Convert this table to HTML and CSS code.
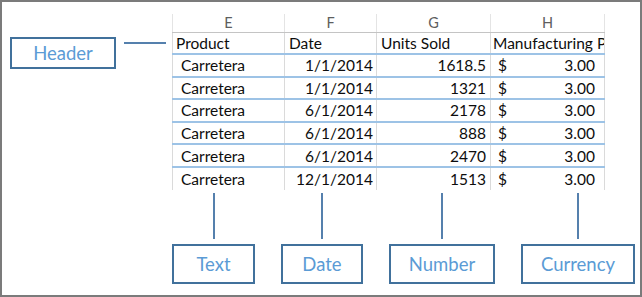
FILE: index.html
```html
<!DOCTYPE html>
<html>
<head>
<meta charset="utf-8">
<link rel="stylesheet" href="styles.css">
</head>
<body>
<div class="frame">
  <div class="top">
    <div class="label-box header-box">Header</div>
    <div class="h-connector"></div>
    <div class="sheet">
      <div class="row letters">
        <div class="cell c">E</div>
        <div class="cell c">F</div>
        <div class="cell c">G</div>
        <div class="cell c">H</div>
      </div>
      <div class="row head">
        <div class="cell h-e">Product</div>
        <div class="cell h-f">Date</div>
        <div class="cell h-g">Units Sold</div>
        <div class="cell h-h">Manufacturing Price</div>
      </div>
      <div class="row data">
        <div class="cell t">Carretera</div>
        <div class="cell d">1/1/2014</div>
        <div class="cell n">1618.5</div>
        <div class="cell cur"><span>$</span><span>3.00</span></div>
      </div>
      <div class="row data">
        <div class="cell t">Carretera</div>
        <div class="cell d">1/1/2014</div>
        <div class="cell n">1321</div>
        <div class="cell cur"><span>$</span><span>3.00</span></div>
      </div>
      <div class="row data">
        <div class="cell t">Carretera</div>
        <div class="cell d">6/1/2014</div>
        <div class="cell n">2178</div>
        <div class="cell cur"><span>$</span><span>3.00</span></div>
      </div>
      <div class="row data">
        <div class="cell t">Carretera</div>
        <div class="cell d">6/1/2014</div>
        <div class="cell n">888</div>
        <div class="cell cur"><span>$</span><span>3.00</span></div>
      </div>
      <div class="row data">
        <div class="cell t">Carretera</div>
        <div class="cell d">6/1/2014</div>
        <div class="cell n">2470</div>
        <div class="cell cur"><span>$</span><span>3.00</span></div>
      </div>
      <div class="row data last">
        <div class="cell t">Carretera</div>
        <div class="cell d">12/1/2014</div>
        <div class="cell n">1513</div>
        <div class="cell cur"><span>$</span><span>3.00</span></div>
      </div>
    </div>
  </div>
  <div class="bottom">
    <div class="callout w-text">
      <div class="v-connector"></div>
      <div class="label-box">Text</div>
    </div>
    <div class="callout w-date">
      <div class="v-connector"></div>
      <div class="label-box">Date</div>
    </div>
    <div class="callout w-number">
      <div class="v-connector"></div>
      <div class="label-box">Number</div>
    </div>
    <div class="callout w-currency">
      <div class="v-connector"></div>
      <div class="label-box">Currency</div>
    </div>
  </div>
</div>
</body>
</html>
```

FILE: styles.css
```css
* { box-sizing: border-box; }
html, body { margin: 0; padding: 0; background: #fff; }
body { font-family: Lato, "Liberation Sans", sans-serif; }

.frame {
  width: 642px;
  height: 297px;
  border: 2px solid #7b7b7b;
  border-right-width: 1px;
  border-bottom-width: 1px;
  background: #fff;
  overflow: hidden;
  box-shadow: inset -1px -1px 0 #7b7b7b;
}

.top {
  display: flex;
  align-items: flex-start;
  padding-top: 12px;
  padding-left: 8px;
}

.label-box {
  border: 2px solid #41719c;
  color: #5b9bd5;
  font-size: 18.5px;
  display: flex;
  align-items: center;
  justify-content: center;
  background: #fff;
}
.header-box {
  width: 106px;
  height: 32px;
  margin-top: 23px;
}
.h-connector {
  width: 42px;
  height: 2px;
  background: #5580ad;
  margin-left: 8px;
  margin-top: 28px;
  margin-right: 6px;
}

.sheet {
  width: 433px;
  font-size: 15.5px;
  color: #0d0d0d;
}
.row {
  display: grid;
  grid-template-columns: 112px 92px 114px 115px;
}
.cell {
  border-left: 1px solid #dadada;
  white-space: nowrap;
  overflow: hidden;
  display: flex;
  align-items: center;
}
.cell:last-child { border-right: 1px solid #dadada; }

.letters { height: 19px; border-bottom: 1px solid #c4c4c4; color: #5e5e5e; font-size: 14.5px; }
.letters .cell { border-left-color: #e4e4e4; }
.letters .cell:last-child { border-right-color: #e4e4e4; }
.c { justify-content: center; padding-bottom: 2px; }

.head { height: 22px; border-bottom: 2px solid #9dc3e6; }
.head .cell { padding-bottom: 1px; }
.h-e { padding-left: 3px; }
.h-f { padding-left: 4px; }
.h-g { padding-left: 4px; }
.h-h { padding-left: 2px; }

.data { height: 22.6px; border-bottom: 2px solid #9dc3e6; }
.data.last { height: 22px; border-bottom: none; }
.t { padding-left: 8px; }
.d { justify-content: flex-end; padding-right: 3px; }
.n { justify-content: flex-end; padding-right: 4px; }
.cur { justify-content: space-between; padding-left: 7px; padding-right: 9px; }

.bottom {
  display: flex;
  gap: 26px;
  padding-left: 170px;
  margin-top: 3px;
}
.callout {
  display: flex;
  flex-direction: column;
  align-items: center;
}
.v-connector {
  width: 2px;
  height: 46px;
  background: #5580ad;
  margin-bottom: 5px;
}
.callout .label-box { width: 100%; height: 40px; }
.w-text { width: 83px; }
.w-date { width: 82px; }
.w-number { width: 106px; }
.w-currency { width: 114px; }
```
